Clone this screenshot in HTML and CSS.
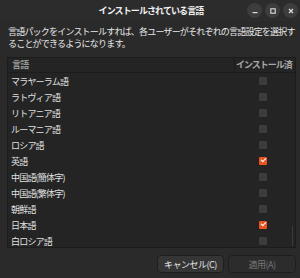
FILE: index.html
```html
<!DOCTYPE html>
<html lang="ja">
<head>
  <meta charset="UTF-8">
  <title>インストールされている言語</title>
  <link rel="stylesheet" href="styles.css">
</head>
<body>
  <div class="window">
    <header class="titlebar">
      <span class="title">インストールされている言語</span>
      <div class="controls">
        <span class="ctl"><svg width="8" height="8" viewBox="0 0 8 8"><rect x="1.5" y="5" width="5" height="1.2" fill="#ddd"/></svg></span>
        <span class="ctl"><svg width="8" height="8" viewBox="0 0 8 8"><rect x="1.8" y="1.8" width="4.4" height="4.4" fill="none" stroke="#ddd" stroke-width="1.1"/></svg></span>
        <span class="ctl"><svg width="8" height="8" viewBox="0 0 8 8"><path d="M2 2L6 6M6 2L2 6" stroke="#ddd" stroke-width="1.2"/></svg></span>
      </div>
    </header>

    <main class="content">
      <p class="desc">言語パックをインストールすれば、各ユーザーがそれぞれの言語設定を選択す<br>ることができるようになります。</p>

      <div class="list">
        <div class="list-head">
          <span class="col-name">言語</span>
          <span class="col-check">インストール済</span>
        </div>
        <div class="rows">
          <div class="row"><span class="name">マラヤーラム語</span><span class="box"></span></div>
          <div class="row"><span class="name">ラトヴィア語</span><span class="box"></span></div>
          <div class="row"><span class="name">リトアニア語</span><span class="box"></span></div>
          <div class="row"><span class="name">ルーマニア語</span><span class="box"></span></div>
          <div class="row"><span class="name">ロシア語</span><span class="box"></span></div>
          <div class="row"><span class="name">英語</span><span class="box checked"></span></div>
          <div class="row"><span class="name">中国語(簡体字)</span><span class="box"></span></div>
          <div class="row"><span class="name">中国語(繁体字)</span><span class="box"></span></div>
          <div class="row"><span class="name">朝鮮語</span><span class="box"></span></div>
          <div class="row"><span class="name">日本語</span><span class="box checked"></span></div>
          <div class="row"><span class="name">白ロシア語</span><span class="box"></span></div>
          <span class="scrollbar"></span>
        </div>
      </div>

      <div class="actions">
        <button class="btn">キャンセル(C)</button>
        <button class="btn disabled">適用(A)</button>
      </div>
    </main>
  </div>
</body>
</html>
```

FILE: styles.css
```css
body {
  margin: 0;
  background: #2a2a2a;
  font-family: "Noto Sans CJK JP", "Noto Sans", sans-serif;
  color: #e6e6e6;
  font-size: 9px;
  letter-spacing: -0.8px;
}

.window {
  width: 300px;
  height: 278px;
  overflow: hidden;
}

.titlebar {
  height: 21px;
  background: #2c2c2c;
  display: flex;
  align-items: center;
  justify-content: center;
  position: relative;
}

.title {
  font-weight: bold;
  font-size: 9px;
  letter-spacing: -0.9px;
  color: #f0f0f0;
  line-height: 1;
  margin-left: 2px;
}

.controls {
  position: absolute;
  right: 2px;
  top: 3px;
  display: flex;
  gap: 3px;
}

.ctl {
  width: 15px;
  height: 15px;
  border-radius: 50%;
  background: #3d3d3d;
  display: flex;
  align-items: center;
  justify-content: center;
}

.content {
  padding: 5px 4px 0 7px;
}

.desc {
  margin: 0 0 0 1px;
  line-height: 12px;
  color: #e8e8e8;
  white-space: nowrap;
}

.list {
  margin-top: 7px;
  border: 1px solid #1c1c1c;
  background: #242424;
  width: 289px;
  height: 191px;
  box-sizing: border-box;
}

.list-head {
  display: flex;
  height: 14px;
  border-bottom: 1px solid #1c1c1c;
  color: #9a9a9a;
  font-weight: bold;
}

.col-name {
  flex: 1;
  padding-left: 4px;
  line-height: 14px;
}

.col-check {
  width: 59px;
  border-left: 1px solid #1c1c1c;
  padding-left: 1px;
  line-height: 14px;
  color: #a8a8a8;
  letter-spacing: -1px;
}

.rows {
  position: relative;
}

.row {
  display: flex;
  align-items: center;
  height: 16px;
}

.name {
  flex: 1;
  padding-left: 3px;
  color: #e0e0e0;
}

.box {
  width: 8px;
  height: 8px;
  border-radius: 1px;
  background: #3c3c3c;
  margin-right: 28px;
}

.box.checked {
  background: #e95420;
  position: relative;
}

.box.checked::after {
  content: "";
  position: absolute;
  left: 2px;
  top: 1px;
  width: 4px;
  height: 2px;
  border-left: 1.3px solid #fff;
  border-bottom: 1.3px solid #fff;
  transform: rotate(-45deg);
}

.scrollbar {
  position: absolute;
  right: 2px;
  top: 153px;
  width: 1px;
  height: 20px;
  background: #3a3a3a;
}

.actions {
  display: flex;
  justify-content: flex-end;
  gap: 4px;
  margin-top: 7px;
}

.btn {
  font-family: "Noto Sans CJK JP", "Noto Sans", sans-serif;
  font-size: 9px;
  letter-spacing: -0.5px;
  height: 18px;
  padding: 0;
  border: 1px solid #1e1e1e;
  border-radius: 4px;
  background: #353535;
  color: #e6e6e6;
  width: 67px;
}

.btn.disabled {
  background: #2c2c2c;
  color: #777;
  width: 68px;
}
```
